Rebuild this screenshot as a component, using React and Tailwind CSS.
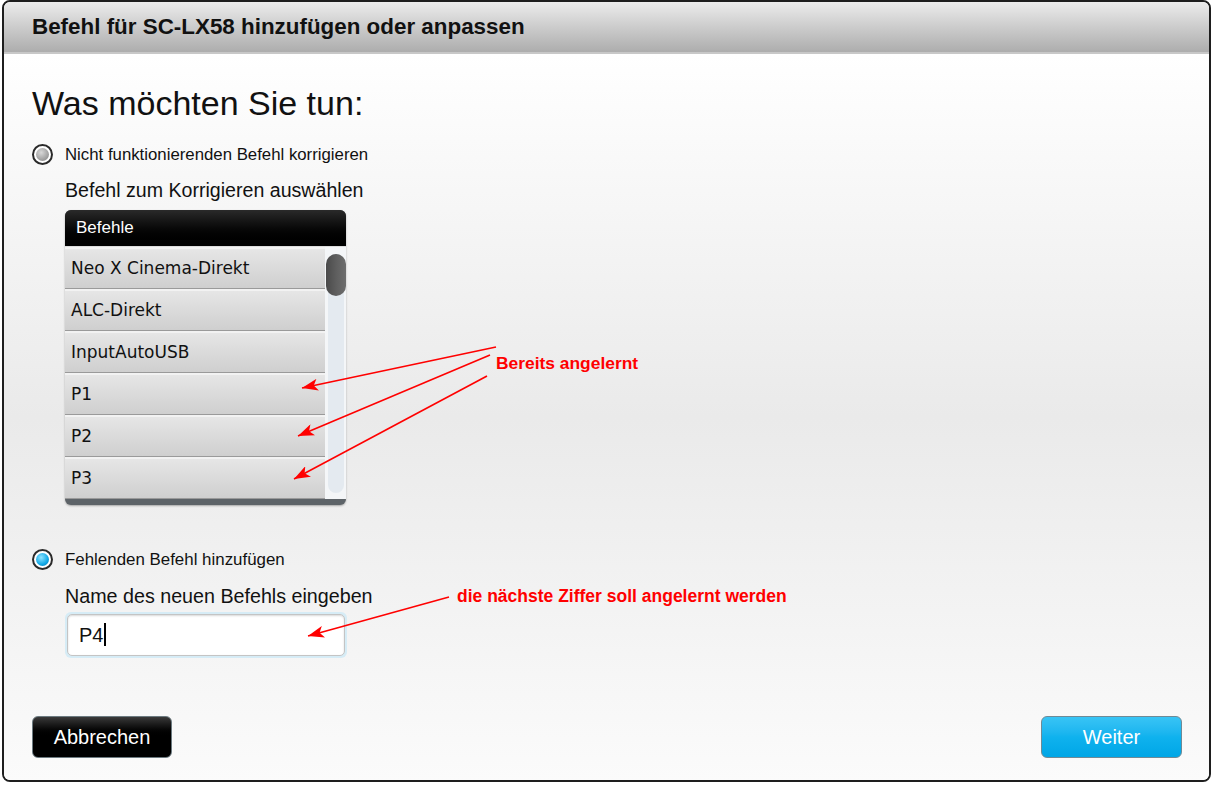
import { useState } from 'react';

const commands = ['Neo X Cinema-Direkt', 'ALC-Direkt', 'InputAutoUSB', 'P1', 'P2', 'P3'];

function Radio({ checked }) {
  return (
    <span className="flex h-[21px] w-[21px] items-center justify-center rounded-full border-2 border-[#2a2a2a] bg-white">
      <span
        className={
          checked
            ? 'h-[13px] w-[13px] rounded-full bg-[radial-gradient(circle_at_40%_35%,#8fe3ff,#10a8e6_60%,#0a6fa8)]'
            : 'h-[13px] w-[13px] rounded-full bg-[radial-gradient(circle_at_40%_35%,#d8d8d8,#9a9a9a_70%,#7a7a7a)]'
        }
      />
    </span>
  );
}

function CommandList() {
  return (
    <div className="w-[281px] overflow-hidden rounded-[6px] bg-[#5d6368] pb-[6px] shadow-[0_1px_2px_rgba(0,0,0,0.3)]">
      <div className="flex h-[36px] items-center bg-gradient-to-b from-[#2a2a2a] to-black px-[11px] text-[17px] text-white">
        Befehle
      </div>
      <div className="flex border-t border-[#dcdcdc] bg-white">
        <div className="flex w-[260px] flex-col">
          {commands.map((c) => (
            <div
              key={c}
              className="flex h-[42px] items-center border-t-2 border-b border-t-[#f2f2f2] border-b-[#9a9a9a] bg-gradient-to-b from-[#e6e6e6] to-[#cfcfcf] px-[6px] text-[17px] text-[#111]"
              style={{ fontFamily: '"DejaVu Sans", Verdana, sans-serif' }}
            >
              {c}
            </div>
          ))}
        </div>
        <div className="flex w-[21px] justify-center bg-[#f4f6f8] pt-[7px] pb-[6px]">
          <div className="flex h-full w-[16px] flex-col rounded-full bg-[#e4eaf0]">
            <div className="h-[42px] w-[20px] -ml-[2px] rounded-full bg-gradient-to-r from-[#4a4a4a] via-[#5e5e5e] to-[#6e6e6e]" />
          </div>
        </div>
      </div>
    </div>
  );
}

function Annotations() {
  const arrows = [
    [496, 347, 302, 388],
    [490, 355, 298, 436],
    [487, 376, 294, 479],
    [449, 597, 308, 636],
  ];
  return (
    <svg className="pointer-events-none absolute left-0 top-0" width="1213" height="785">
      <defs>
        <marker id="head" markerWidth="18" markerHeight="12" refX="16" refY="6" orient="auto" markerUnits="userSpaceOnUse">
          <path d="M0 0 L16 6 L0 12 L4 6 Z" fill="#ff0000" />
        </marker>
      </defs>
      {arrows.map(([x1, y1, x2, y2], i) => (
        <line key={i} x1={x1} y1={y1} x2={x2} y2={y2} stroke="#ff0000" strokeWidth="1.6" markerEnd="url(#head)" />
      ))}
    </svg>
  );
}

export default function App() {
  const [name] = useState('P4');
  return (
    <div className="relative h-[785px] w-[1213px] overflow-hidden bg-white px-[2px]" style={{ fontFamily: '"Liberation Sans", Arial, sans-serif' }}>
      <div className="relative flex h-[782px] flex-col overflow-hidden rounded-[8px] border-2 border-[#1e1e1e]">
        {/* title bar */}
        <div className="flex h-[52px] shrink-0 items-center border-b-2 border-[#c8c8c8] bg-gradient-to-b from-[#ececec] to-[#adadad] pl-[28px] text-[22.4px] font-bold text-[#111]">
          Befehl für SC-LX58 hinzufügen oder anpassen
        </div>

        {/* body */}
        <div className="flex flex-1 flex-col bg-gradient-to-b from-white via-[#eaeaea] to-[#fbfbfb] pl-[28px] pr-[27px] text-[#111]">
          <div className="mt-[30px] text-[34px] leading-[38px]">Was möchten Sie tun:</div>

          <div className="mt-[20px] flex items-center gap-[12px]">
            <Radio checked={false} />
            <span className="text-[16.8px]">Nicht funktionierenden Befehl korrigieren</span>
          </div>

          <div className="ml-[33px] flex flex-col">
            <div className="mt-[11px] text-[19.6px] leading-[24px]">Befehl zum Korrigieren auswählen</div>
            <div className="mt-[8px]">
              <CommandList />
            </div>
          </div>

          <div className="mt-[42px] flex items-center gap-[12px]">
            <Radio checked />
            <span className="text-[16.9px]">Fehlenden Befehl hinzufügen</span>
          </div>

          <div className="ml-[33px] flex flex-col">
            <div className="mt-[11px] text-[19.7px] leading-[24px]">Name des neuen Befehls eingeben</div>
            <div className="mt-[4px] w-[282px] rounded-[6px] bg-[#d6ecf6] p-[2px]">
              <div className="flex h-[42px] items-center rounded-[5px] border border-[#c4c4c4] bg-white px-[11px] text-[20px] shadow-[inset_0_1px_2px_rgba(0,0,0,0.15)]">
                {name}
                <span className="ml-[1px] h-[23px] w-[2px] bg-black" />
              </div>
            </div>
          </div>

          <div className="mt-[58px] flex justify-between">
            <button className="h-[42px] w-[140px] rounded-[6px] border border-[#6c7a80] bg-gradient-to-b from-[#3a3a3a] via-black to-black text-[20px] text-white">
              Abbrechen
            </button>
            <button className="h-[42px] w-[141px] rounded-[6px] border border-[#6f8a96] bg-gradient-to-b from-[#38c4f5] via-[#0fb2ee] to-[#00a6e6] text-[20px] text-white">
              Weiter
            </button>
          </div>
        </div>
      </div>

      <Annotations />
      <div className="absolute left-[496px] top-[350px] text-[17.4px] font-bold text-[#ff0000]">Bereits angelernt</div>
      <div className="absolute left-[457px] top-[583px] text-[17.5px] font-bold text-[#ff0000]">die nächste Ziffer soll angelernt werden</div>
    </div>
  );
}
